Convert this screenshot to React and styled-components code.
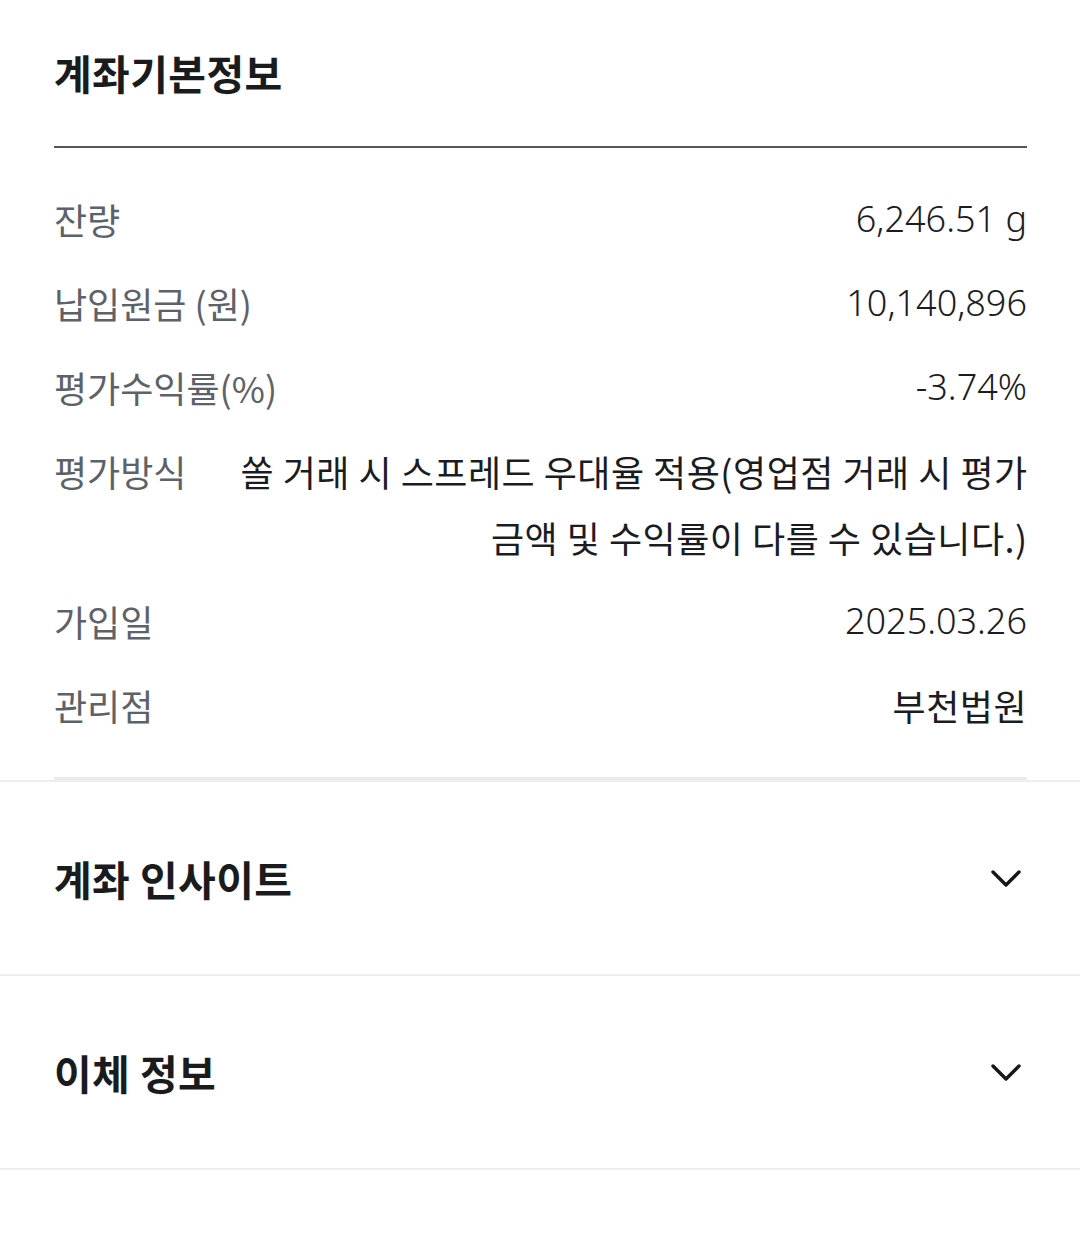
import React from "react";
import styled, { createGlobalStyle } from "styled-components";

const Global = createGlobalStyle`
  html, body { margin: 0; padding: 0; background: #fff; }
  body {
    font-family: "Noto Sans CJK KR", "Noto Sans", sans-serif;
    -webkit-font-smoothing: antialiased;
  }
  * { box-sizing: border-box; }
`;

const Page = styled.div`
  width: 1080px;
  background: #fff;
`;

const InfoSection = styled.section`
  padding: 46px 53px 0 54px;
  border-bottom: 2px solid #eceef2;
`;

const SectionTitle = styled.h2`
  margin: 0;
  font-size: 41px;
  line-height: 53px;
  font-weight: 700;
  color: #1a1b1d;
  letter-spacing: 0.4px;
`;

const HeavyRule = styled.hr`
  margin: 47px 0 0;
  border: 0;
  height: 2px;
  background: #53575c;
`;

const InfoList = styled.dl`
  margin: 0;
  padding: 29px 0 30px;
  border-bottom: 3px solid #e9ebf0;
`;

const Row = styled.div`
  display: flex;
  justify-content: space-between;
  align-items: flex-start;
  gap: 54px;
  padding: 9px 0;
`;

const Label = styled.dt`
  flex-shrink: 0;
  font-size: 36px;
  line-height: 66px;
  color: #5d6168;
  letter-spacing: 0;
`;

const Value = styled.dd`
  margin: 0;
  flex: 1;
  text-align: right;
  font-size: 36px;
  line-height: 66px;
  color: #1b1c1f;
  letter-spacing: ${(p) => (p.$numeric ? "0" : "0.5px")};
  font-family: ${(p) =>
    p.$numeric
      ? '"Noto Sans", "Noto Sans CJK KR", sans-serif'
      : '"Noto Sans CJK KR", sans-serif'};
  font-weight: ${(p) => (p.$numeric ? 300 : 400)};
  white-space: nowrap;
`;

const Accordion = styled.button`
  display: flex;
  width: 100%;
  align-items: center;
  justify-content: space-between;
  height: 194px;
  padding: 0 58px 0 54px;
  margin: 0;
  background: #fff;
  border: 0;
  border-bottom: 2px solid #eceef2;
  font-family: inherit;
  cursor: pointer;
  text-align: left;
`;

const AccordionTitle = styled.span`
  font-size: 41px;
  font-weight: 700;
  color: #1a1b1d;
  letter-spacing: 0.4px;
  line-height: 53px;
`;

const Chevron = () => (
  <svg width="32" height="22" viewBox="0 0 32 22" fill="none">
    <path
      d="M3 5 L16 18 L29 5"
      stroke="#16171a"
      strokeWidth="3.4"
      strokeLinecap="round"
      strokeLinejoin="round"
    />
  </svg>
);

const rows = [
  { label: "잔량", value: "6,246.51 g", numeric: true },
  { label: "납입원금 (원)", value: "10,140,896", numeric: true },
  { label: "평가수익률(%)", value: "-3.74%", numeric: true },
  {
    label: "평가방식",
    value: (
      <>
        쏠 거래 시 스프레드 우대율 적용(영업점 거래 시 평가
        <br />
        금액 및 수익률이 다를 수 있습니다.)
      </>
    ),
  },
  { label: "가입일", value: "2025.03.26", numeric: true },
  { label: "관리점", value: "부천법원" },
];

export default function App() {
  return (
    <Page>
      <Global />
      <InfoSection>
        <SectionTitle>계좌기본정보</SectionTitle>
        <HeavyRule />
        <InfoList>
          {rows.map((r) => (
            <Row key={r.label}>
              <Label>{r.label}</Label>
              <Value $numeric={r.numeric}>{r.value}</Value>
            </Row>
          ))}
        </InfoList>
      </InfoSection>
      <Accordion>
        <AccordionTitle>계좌 인사이트</AccordionTitle>
        <Chevron />
      </Accordion>
      <Accordion>
        <AccordionTitle>이체 정보</AccordionTitle>
        <Chevron />
      </Accordion>
    </Page>
  );
}
